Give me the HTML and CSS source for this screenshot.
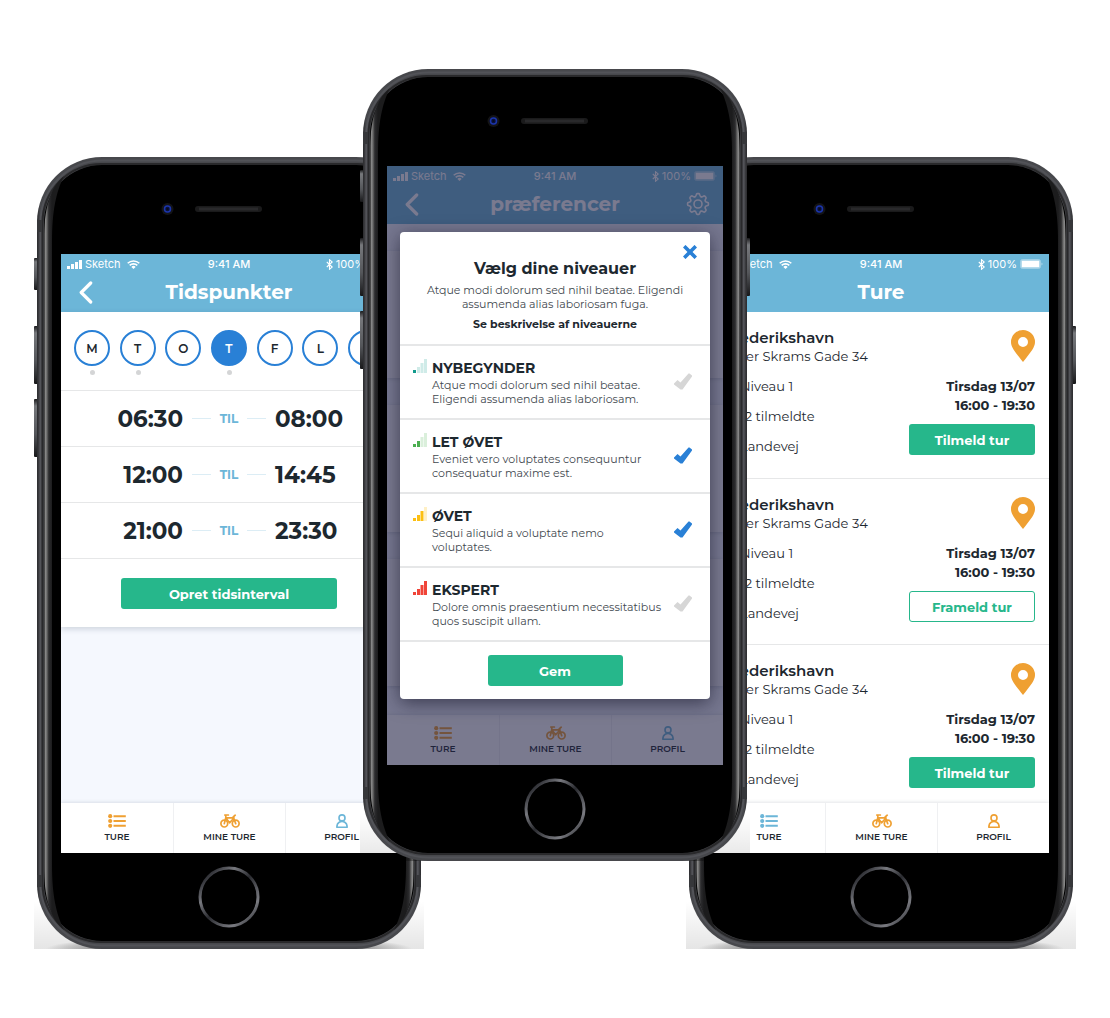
FILE: index.html
```html
<!DOCTYPE html>
<html lang="da">
<head>
<meta charset="utf-8">
<meta name="viewport" content="width=device-width, initial-scale=1">
<title>Cykelture</title>
<link rel="stylesheet" href="styles.css">
</head>
<body>
<svg class="sprite" aria-hidden="true">
  <defs>
    <linearGradient id="rim" x1="0" x2="1" y1="0" y2="0">
      <stop offset="0" stop-color="#2b2b2e"/><stop offset=".008" stop-color="#47484c"/>
      <stop offset=".05" stop-color="#47484c"/><stop offset=".95" stop-color="#47484c"/>
      <stop offset=".992" stop-color="#47484c"/><stop offset="1" stop-color="#2b2b2e"/>
    </linearGradient>
    <linearGradient id="glare" gradientUnits="userSpaceOnUse" x1="7" x2="15" y1="0" y2="0">
      <stop offset="0" stop-color="#2a2a2a"/><stop offset=".2" stop-color="#8c8c8c"/>
      <stop offset=".42" stop-color="#5a5a5a"/><stop offset=".6" stop-color="#2c2c2e"/>
      <stop offset="1" stop-color="#1c1c1d"/>
    </linearGradient>
    <linearGradient id="home" x1="0" x2="1" y1="0" y2="1">
      <stop offset="0" stop-color="#1c1d22"/><stop offset=".12" stop-color="#2a2b30"/>
      <stop offset=".3" stop-color="#77787e"/><stop offset=".5" stop-color="#2a2b30"/>
      <stop offset=".78" stop-color="#7a7b81"/><stop offset="1" stop-color="#17181c"/>
    </linearGradient>
    <linearGradient id="key" x1="0" x2="0" y1="0" y2="1">
      <stop offset="0" stop-color="#1b1b1d"/><stop offset=".12" stop-color="#77797d"/>
      <stop offset=".6" stop-color="#54565a"/><stop offset="1" stop-color="#18181a"/>
    </linearGradient>
    <path id="edge" d="M27 19C13 30 7 52 7 84V708C7 740 13 762 27 773C19 757 15 738 15 708V84C15 54 19 35 27 19Z"/>
    <path id="tooth" d="M-3.020 -7.300Q-2 -7.600 -1.800 -9Q-1.600 -10.400 -.8 -10.400H.8Q1.600 -10.400 1.800 -9Q2 -7.600 3.020 -7.300"/>
  </defs>
  <symbol id="shell" viewBox="0 0 390 792">
    <g fill="url(#key)">
      <rect x="0" y="101" width="5" height="32" rx="1"/><rect x="0" y="169" width="5" height="58" rx="1"/>
      <rect x="0" y="242" width="5" height="58" rx="1"/><rect x="385" y="169" width="5" height="58" rx="1"/>
    </g>
    <g transform="translate(3 0)">
      <rect width="384" height="792" rx="65" fill="url(#rim)"/>
      <rect x="3.500" y="3.500" width="377" height="785" rx="62" fill="none" stroke="#525358" stroke-width="2"/>
      <rect x="5.500" y="7" width="373" height="778" rx="59" fill="none" stroke="#29292b" stroke-width="2"/>
      <path d="M0 63h5v12H0zM379 63h5v12h-5zM0 718h5v12H0zM379 718h5v12h-5z" fill="#36373a"/>
      <rect x="7" y="8" width="370" height="776" rx="58" fill="#000"/>
      <use href="#edge" fill="url(#glare)"/>
      <use href="#edge" fill="url(#glare)" transform="matrix(-1 0 0 1 384 0)"/>
      <circle cx="130.500" cy="52" r="6" fill="#141416"/><circle cx="130.500" cy="52" r="4" fill="#0b1238"/>
      <circle cx="130.500" cy="52" r="3" fill="none" stroke="#1c35a8" stroke-width="1.500"/>
      <circle cx="130.500" cy="52" r="1" fill="#060a20"/>
      <rect x="158" y="49" width="67" height="6" rx="3" fill="#1a1a1b"/>
      <rect x="162" y="50.500" width="59" height="3" fill="#29292b"/>
      <circle cx="192" cy="740" r="29" fill="none" stroke="url(#home)" stroke-width="3"/>
    </g>
  </symbol>
  <symbol id="signal" viewBox="0 0 15 9"><path fill="currentColor" d="M0 6h3v3H0zM4 4h3v5H4zM8 2h3v7H8zM12 0h3v9h-3z"/></symbol>
  <symbol id="wifi" viewBox="0 0 13 9"><g fill="none" stroke="currentColor" stroke-width="1.600"><path d="M.7 3.300a8.300 8.300 0 0 1 11.600 0M2.700 5.400a5.400 5.400 0 0 1 7.600 0"/></g><path fill="currentColor" d="M4.400 6.900a3 3 0 0 1 4.200 0L6.500 9z"/></symbol>
  <symbol id="bluetooth" viewBox="0 0 7 11"><path fill="none" stroke="currentColor" stroke-width="1.100" d="M.8 3l5.400 5L3.500 10.300V.7L6.200 3 .8 8"/></symbol>
  <symbol id="battery" viewBox="0 0 23 10"><rect x=".5" y=".5" width="20" height="9" rx="2" fill="none" stroke="currentColor" opacity=".35"/><rect x="1.500" y="1.500" width="18" height="7" fill="currentColor"/><path d="M21.500 3.500q2 1.500 0 3z" fill="currentColor" opacity=".5"/></symbol>
  <symbol id="back" viewBox="0 0 14 23"><path fill="none" stroke="currentColor" stroke-width="3.200" stroke-linecap="round" stroke-linejoin="round" d="M11.700 2L2.200 11.500l9.500 9.500"/></symbol>
  <symbol id="gear" viewBox="-12 -12 24 24"><g fill="none" stroke="currentColor" stroke-width="1.600" stroke-linejoin="round" stroke-linecap="round"><circle r="4"/><use href="#tooth"/><use href="#tooth" transform="rotate(45)"/><use href="#tooth" transform="rotate(90)"/><use href="#tooth" transform="rotate(135)"/><use href="#tooth" transform="rotate(180)"/><use href="#tooth" transform="rotate(225)"/><use href="#tooth" transform="rotate(270)"/><use href="#tooth" transform="rotate(315)"/></g></symbol>
  <symbol id="list" viewBox="0 0 18 14"><g fill="currentColor"><circle cx="2.200" cy="2.200" r="2.100"/><circle cx="2.200" cy="7" r="2.100"/><circle cx="2.200" cy="11.800" r="2.100"/><path d="M5.500 1.200h12.300v2H5.500zM5.500 6h12.300v2H5.500zM5.500 10.800h12.300v2H5.500z"/></g></symbol>
  <symbol id="bike" viewBox="0 0 20 14"><g fill="none" stroke="currentColor" stroke-width="1.700" stroke-linecap="round" stroke-linejoin="round"><circle cx="4.300" cy="9.600" r="3.400"/><circle cx="15.700" cy="9.600" r="3.400"/><path d="M4.300 9.600L5.800 3.800L9.500 8.800L14 4M5.800 3.800H14M4.800 1h3.600M5.800 3.800V1M15.700 9.600L13.200 3l2-1.800"/></g></symbol>
  <symbol id="user" viewBox="0 0 12 14"><g fill="none" stroke="currentColor" stroke-width="1.600" stroke-linejoin="round"><circle cx="6" cy="3.900" r="3"/><path d="M3.200 8.200q2.800-1.600 5.600 0 2.200 1.200 2.400 5H.8q.2-3.800 2.400-5z"/></g></symbol>
  <symbol id="pin" viewBox="0 0 24 32"><path fill="currentColor" fill-rule="evenodd" d="M12 0a12 12 0 0 1 12 12c0 5-4 10-12 20C4 22 0 17 0 12A12 12 0 0 1 12 0zm0 7a5 5 0 1 0 0 10 5 5 0 0 0 0-10z"/></symbol>
  <symbol id="close" viewBox="0 0 14 14"><path fill="none" stroke="currentColor" stroke-width="3.600" d="M1.200 1.200l11.600 11.600M12.800 1.200L1.200 12.800"/></symbol>
  <symbol id="bars" viewBox="0 0 14 14"><g fill="currentColor"><rect y="11" width="3" height="3"/><rect x="4" y="8" width="3" height="6" fill="var(--b2)"/><rect x="7.500" y="4" width="3" height="10" fill="var(--b3)"/><rect x="11" y="0" width="3" height="14" fill="var(--b4)"/></g></symbol>
</svg>

<main class="stage">
  <section class="phone phone-side" aria-label="Tidspunkter">
    <svg class="shell"><use href="#shell"/></svg>
    <div class="screen screen-tinted">
      <header class="top">
        <div class="status"><span class="status-left"><svg class="i-signal"><use href="#signal"/></svg>Sketch<svg class="i-wifi"><use href="#wifi"/></svg></span><b class="clock">9:41 AM</b><span class="status-right"><svg class="i-bt"><use href="#bluetooth"/></svg>100%<svg class="i-batt"><use href="#battery"/></svg></span></div>
        <div class="titlebar"><button class="icon-button" aria-label="Tilbage"><svg class="i-back"><use href="#back"/></svg></button><h1>Tidspunkter</h1><span></span></div>
      </header>
      <div class="content">
        <div class="card">
          <div class="days">
            <button class="day has-dot">M</button><button class="day has-dot">T</button><button class="day">O</button><button class="day has-dot is-active">T</button><button class="day">F</button><button class="day">L</button><button class="day">S</button>
          </div>
          <div class="slot"><time>06:30</time><span class="til">TIL</span><time>08:00</time></div>
          <div class="slot"><time>12:00</time><span class="til">TIL</span><time>14:45</time></div>
          <div class="slot"><time>21:00</time><span class="til">TIL</span><time>23:30</time></div>
          <div class="card-action"><button class="button button-wide">Opret tidsinterval</button></div>
        </div>
      </div>
      <nav class="tabs"><a href="#ture"><svg class="i-list"><use href="#list"/></svg>TURE</a><a href="#mine"><svg class="i-bike"><use href="#bike"/></svg>MINE TURE</a><a href="#profil" class="is-current"><svg class="i-user"><use href="#user"/></svg>PROFIL</a></nav>
    </div>
  </section>

  <section class="phone phone-front" aria-label="Præferencer">
    <svg class="shell"><use href="#shell"/></svg>
    <div class="screen screen-tinted">
      <header class="top">
        <div class="status"><span class="status-left"><svg class="i-signal"><use href="#signal"/></svg>Sketch<svg class="i-wifi"><use href="#wifi"/></svg></span><b class="clock">9:41 AM</b><span class="status-right"><svg class="i-bt"><use href="#bluetooth"/></svg>100%<svg class="i-batt"><use href="#battery"/></svg></span></div>
        <div class="titlebar"><button class="icon-button" aria-label="Tilbage"><svg class="i-back"><use href="#back"/></svg></button><h1>præferencer</h1><button class="icon-button" aria-label="Indstillinger"><svg class="i-gear"><use href="#gear"/></svg></button></div>
      </header>
      <div class="content panels"><div class="panel"></div><div class="panel"></div><div class="panel"></div></div>
      <nav class="tabs"><a href="#ture"><svg class="i-list"><use href="#list"/></svg>TURE</a><a href="#mine"><svg class="i-bike"><use href="#bike"/></svg>MINE TURE</a><a href="#profil" class="is-current"><svg class="i-user"><use href="#user"/></svg>PROFIL</a></nav>
      <div class="overlay">
        <form class="modal" role="dialog" aria-labelledby="modal-title">
          <div class="modal-head">
            <button type="button" class="icon-button close" aria-label="Luk"><svg class="i-close"><use href="#close"/></svg></button>
            <h2 id="modal-title">Vælg dine niveauer</h2>
            <p>Atque modi dolorum sed nihil beatae. Eligendi<br>assumenda alias laboriosam fuga.</p>
            <a href="#niveauer">Se beskrivelse af niveauerne</a>
          </div>
          <label class="level level-1"><svg class="i-bars"><use href="#bars"/></svg><span class="level-text"><b>NYBEGYNDER</b><span>Atque modi dolorum sed nihil beatae.<br>Eligendi assumenda alias laboriosam.</span></span><input type="checkbox"></label>
          <label class="level level-2"><svg class="i-bars"><use href="#bars"/></svg><span class="level-text"><b>LET ØVET</b><span>Eveniet vero voluptates consequuntur<br>consequatur maxime est.</span></span><input type="checkbox" checked></label>
          <label class="level level-3"><svg class="i-bars"><use href="#bars"/></svg><span class="level-text"><b>ØVET</b><span>Sequi aliquid a voluptate nemo<br>voluptates.</span></span><input type="checkbox" checked></label>
          <label class="level level-4"><svg class="i-bars"><use href="#bars"/></svg><span class="level-text"><b>EKSPERT</b><span>Dolore omnis praesentium necessitatibus<br>quos suscipit ullam.</span></span><input type="checkbox"></label>
          <div class="modal-foot"><button type="button" class="button">Gem</button></div>
        </form>
      </div>
    </div>
  </section>

  <section class="phone phone-side" aria-label="Ture">
    <svg class="shell"><use href="#shell"/></svg>
    <div class="screen">
      <header class="top">
        <div class="status"><span class="status-left"><svg class="i-signal"><use href="#signal"/></svg>Sketch<svg class="i-wifi"><use href="#wifi"/></svg></span><b class="clock">9:41 AM</b><span class="status-right"><svg class="i-bt"><use href="#bluetooth"/></svg>100%<svg class="i-batt"><use href="#battery"/></svg></span></div>
        <div class="titlebar"><span></span><h1>Ture</h1><span></span></div>
      </header>
      <div class="content">
        <article class="trip">
          <div class="trip-place"><div><h2>Frederikshavn</h2><p>Peter Skrams Gade 34</p></div><svg class="i-pin"><use href="#pin"/></svg></div>
          <div class="trip-body"><ul><li>Niveau 1</li><li>12 tilmeldte</li><li>Landevej</li></ul><div class="trip-when"><time>Tirsdag 13/07</time><time>16:00 - 19:30</time><button class="button">Tilmeld tur</button></div></div>
        </article>
        <article class="trip">
          <div class="trip-place"><div><h2>Frederikshavn</h2><p>Peter Skrams Gade 34</p></div><svg class="i-pin"><use href="#pin"/></svg></div>
          <div class="trip-body"><ul><li>Niveau 1</li><li>12 tilmeldte</li><li>Landevej</li></ul><div class="trip-when"><time>Tirsdag 13/07</time><time>16:00 - 19:30</time><button class="button button-outline">Frameld tur</button></div></div>
        </article>
        <article class="trip">
          <div class="trip-place"><div><h2>Frederikshavn</h2><p>Peter Skrams Gade 34</p></div><svg class="i-pin"><use href="#pin"/></svg></div>
          <div class="trip-body"><ul><li>Niveau 1</li><li>12 tilmeldte</li><li>Landevej</li></ul><div class="trip-when"><time>Tirsdag 13/07</time><time>16:00 - 19:30</time><button class="button">Tilmeld tur</button></div></div>
        </article>
      </div>
      <nav class="tabs"><a href="#ture" class="is-current"><svg class="i-list"><use href="#list"/></svg>TURE</a><a href="#mine"><svg class="i-bike"><use href="#bike"/></svg>MINE TURE</a><a href="#profil"><svg class="i-user"><use href="#user"/></svg>PROFIL</a></nav>
    </div>
  </section>
</main>
</body>
</html>
```
FILE: styles.css
```css
:root {
  --ink: #1d282f;
  --sky: #6cb6d8;
  --blue: #2980d6;
  --green: #26b78b;
  --orange: #efa032;
  --line: #e6e7e8;
}

* { box-sizing: border-box; }

body {
  margin: 0;
  background: #fff;
  color: var(--ink);
  font-family: Montserrat, Inter, "Liberation Sans", sans-serif;
}

h1, h2, p, ul { margin: 0; padding: 0; }
ul { list-style: none; }
a { color: inherit; text-decoration: none; }
svg { display: block; flex: none; }
button { font: inherit; color: inherit; cursor: pointer; }
.sprite { position: absolute; width: 0; height: 0; }

/* Devices */
.stage {
  display: flex;
  justify-content: center;
  align-items: flex-start;
  padding: 69px 0;
}
.phone {
  position: relative;
  flex: none;
  width: 384px;
  padding: 97px 24px 96px;
}
.phone-side { margin-top: 88px; }
.phone-front { z-index: 1; margin: 0 -58px; }
.phone::before {
  content: "";
  position: absolute;
  inset: auto -3px 0;
  height: 48px;
  background:
    radial-gradient(ellipse 47% 14px at 50% 100%, rgba(0, 0, 0, .5) 60%, transparent),
    linear-gradient(rgba(0, 0, 0, 0), rgba(0, 0, 0, .1));
}
.shell { position: absolute; top: 0; left: -3px; width: 390px; height: 792px; }
.screen {
  position: relative;
  display: flex;
  flex-direction: column;
  height: 599px;
  overflow: hidden;
  background: #fff;
}
.screen-tinted { background: #f5f8fe; }
.content { flex: 1; min-height: 0; }

/* Header */
.top { height: 58px; background: var(--sky); color: #fff; }
.status {
  display: grid;
  grid-template-columns: 1fr auto 1fr;
  align-items: center;
  height: 20px;
  padding: 0 6px;
  font: 400 11px/20px Inter, sans-serif;
}
.status-left, .status-right { display: flex; align-items: center; }
.status-left { gap: 3px; }
.status-right { justify-content: flex-end; gap: 3px; }
.clock { font-weight: 500; }
.i-signal { width: 15px; height: 9px; }
.i-wifi { width: 13px; height: 9px; margin-left: 3px; }
.i-bt { width: 7px; height: 11px; }
.i-batt { width: 23px; height: 10px; }
.titlebar {
  display: grid;
  grid-template-columns: 24px 1fr 24px;
  align-items: center;
  height: 36px;
  padding: 0 13px;
}
.titlebar h1 { font-size: 20px; line-height: 24px; font-weight: 700; text-align: center; }
.icon-button { display: flex; justify-content: center; padding: 0; border: 0; background: none; }
.i-back { width: 14px; height: 23px; }
.i-gear { width: 24px; height: 24px; }

/* Bottom tabs */
.tabs {
  position: relative;
  display: grid;
  grid-template-columns: repeat(3, 1fr);
  height: 50px;
  background: #fff;
  box-shadow: 0 0 4px rgba(40, 60, 80, .2);
}
.tabs a {
  display: flex;
  flex-direction: column;
  align-items: center;
  gap: 2px;
  padding-top: 11px;
  font-size: 9px;
  line-height: 13px;
  font-weight: 600;
}
.tabs a + a { border-left: 1px solid #eff0f2; }
.tabs svg { height: 14px; color: var(--orange); }
.tabs .is-current svg { color: var(--sky); }
.i-list { width: 18px; }
.i-bike { width: 20px; }
.i-user { width: 12px; }

.button {
  height: 31px;
  padding: 0;
  border: 0;
  border-radius: 3px;
  background: var(--green);
  color: #fff;
  font-size: 13px;
  line-height: 18px;
  font-weight: 700;
}
.button-outline { border: 1px solid var(--green); background: #fff; color: var(--green); }

/* Time slots */
.card { background: #fff; box-shadow: 0 2px 6px rgba(40, 60, 80, .2); }
.days { display: flex; justify-content: space-between; height: 78px; padding: 18px 13px; }
.day {
  position: relative;
  width: 36px;
  height: 36px;
  padding: 0;
  border: 2px solid var(--blue);
  border-radius: 50%;
  background: #fff;
  font-size: 12px;
  font-weight: 600;
}
.day.is-active { background: var(--blue); color: #fff; }
.day.has-dot::after {
  content: "";
  position: absolute;
  top: 38px;
  left: 14px;
  width: 5px;
  height: 5px;
  border-radius: 50%;
  background: #d4d5d6;
}
.slot {
  display: grid;
  grid-template-columns: 1fr 74px 1fr;
  align-items: center;
  gap: 9px;
  height: 56px;
  border-top: 1px solid var(--line);
  font-size: 23px;
  line-height: 28px;
  font-weight: 700;
}
.slot time:first-child { text-align: right; }
.til {
  display: flex;
  align-items: center;
  justify-content: space-between;
  color: var(--sky);
  font-size: 12px;
}
.til::before, .til::after { content: ""; width: 19px; height: 1px; background: #dcedf5; }
.card-action { display: flex; justify-content: center; padding: 19px 60px 18px; border-top: 1px solid var(--line); }
.button-wide { flex: 1; }

/* Preferences behind the dialog */
.panels { display: flex; flex-direction: column; gap: 27px; padding-top: 27px; }
.panel { flex: 0 0 127px; background: #fff; box-shadow: 0 1px 4px rgba(40, 60, 80, .2); }
.overlay {
  position: absolute;
  inset: 0;
  display: flex;
  align-items: flex-start;
  padding: 66px 13px;
  background: rgba(33, 33, 68, .6);
}

/* Level dialog */
.modal {
  flex: 1;
  border-radius: 4px;
  background: #fff;
  box-shadow: 0 4px 18px rgba(20, 20, 40, .6);
}
.modal-head {
  position: relative;
  height: 112px;
  padding-top: 26px;
  text-align: center;
  font-size: 11px;
  line-height: 14px;
}
.modal-head h2 { margin-bottom: 3px; font-size: 16px; line-height: 22px; font-weight: 700; }
.modal-head p { margin-bottom: 6px; color: #3f494f; }
.modal-head a { font-weight: 700; }
.close { position: absolute; top: 13px; right: 13px; color: var(--blue); }
.i-close { width: 14px; height: 14px; }
.level {
  display: flex;
  height: 74px;
  padding: 13px 18px 0 13px;
  border-top: 2px solid var(--line);
}
.level-text { flex: 1; padding-left: 5px; font-size: 11px; line-height: 14px; color: #3f494f; }
.level-text b { display: block; margin-bottom: 1px; font-size: 14px; line-height: 18px; font-weight: 700; color: var(--ink); }
.level-text span { display: block; }
.i-bars { width: 14px; height: 14px; color: var(--on); }
.level-1 { --on: #119a8c; --b2: #cfebe8; --b3: #cfebe8; --b4: #cfebe8; }
.level-2 { --on: #4bae50; --b2: #4bae50; --b3: #daefdb; --b4: #daefdb; }
.level-3 { --on: #fcbf12; --b2: #fcbf12; --b3: #fcbf12; --b4: #fff0c5; }
.level-4 { --on: #f04438; --b2: #f04438; --b3: #f04438; --b4: #f04438; }
.level input {
  appearance: none;
  width: 18px;
  height: 17px;
  margin: 14px 0 0;
  background: #d6d6d6;
  clip-path: path("M0 11.500L0 10.500L3.500 7L6.500 9.500L14.500 .5L15.500 .5L18 2.500L18 3.500L8.500 16.500L6.500 16.500Z");
}
.level input:checked { background: var(--blue); }
.modal-foot { display: flex; justify-content: center; padding: 13px 0; border-top: 2px solid var(--line); }
.modal-foot .button { width: 135px; }

/* Trips */
.trip { height: 166px; padding: 17px 14px 0 11px; font-size: 13px; line-height: 19px; }
.trip + .trip { border-top: 1px solid var(--line); }
.trip-place { display: flex; justify-content: space-between; height: 48px; }
.trip h2 { font-size: 15px; line-height: 18px; font-weight: 600; }
.i-pin { width: 24px; height: 32px; margin-top: 1px; color: var(--orange); }
.trip-body { display: flex; justify-content: space-between; }
.trip ul { display: grid; gap: 11px; align-content: start; padding-left: 16px; }
.trip-when { display: flex; flex-direction: column; width: 126px; text-align: right; font-weight: 700; }
.trip-when .button { margin-top: 9px; }
```
